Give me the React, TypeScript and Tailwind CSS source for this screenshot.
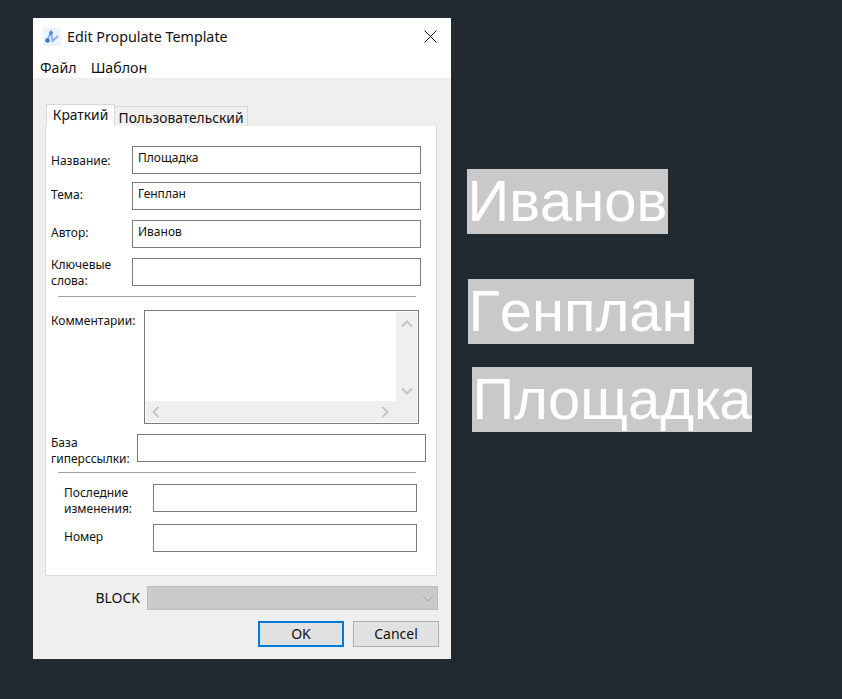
const ui = '"Noto Sans", "Open Sans", sans-serif';

function Row({ label, labelWidth, labelTop = 0, inputWidth, top, className = '', text }: { label: React.ReactNode; labelWidth: number; labelTop?: number; inputWidth: number; top?: number; className?: string; text?: string }) {
  return (
    <div className={`flex items-start h-[28px] ${className}`} style={{ marginTop: top }}>
      <div className="text-[12px] leading-[16px] text-[#111] shrink-0" style={{ width: labelWidth, marginTop: labelTop }}>
        {label}
      </div>
      <div className="h-[28px] border border-[#7a7a7a] bg-white pl-[5px] text-[12px] leading-[22px] text-[#111]" style={{ width: inputWidth }}>
        {text}
      </div>
    </div>
  );
}

function Chevron({ d }: { d: string }) {
  return (
    <svg width="12" height="12" viewBox="0 0 12 12" fill="none" stroke="#c4c4c4" strokeWidth="2">
      <path d={d} />
    </svg>
  );
}

function CadLabel({ text, width, left, top }: { text: string; width: number; left: number; top: number }) {
  return (
    <div
      className="h-[65px] bg-[#c9c9c9] text-white text-[58px] leading-[63px] whitespace-nowrap text-center [font-kerning:none]"
      style={{ width, marginLeft: left, marginTop: top, fontFamily: '"Liberation Sans", sans-serif' }}
    >
      {text}
    </div>
  );
}

export default function App() {
  return (
    <div className="w-[842px] h-[699px] bg-[#212931] flex items-start overflow-hidden" style={{ fontFamily: ui }}>
      <div className="w-[418px] h-[641px] ml-[33px] mt-[18px] bg-[#efefef] shrink-0 flex flex-col">
        {/* Title bar + menu */}
        <div className="bg-white h-[60px] shrink-0">
          <div className="h-[37px] flex items-center pl-[10px] pr-[14px]">
            <svg width="18" height="18" viewBox="0 0 18 18" className="shrink-0">
              <defs>
                <filter id="soft" x="-20%" y="-20%" width="140%" height="140%">
                  <feGaussianBlur stdDeviation="0.5" />
                </filter>
              </defs>
              <rect width="18" height="18" fill="#eef3fb" />
              <g filter="url(#soft)">
                <path d="M4 13 L8 4 L9.5 13 L15 8" fill="none" stroke="#8fb2e8" strokeWidth="2" />
                <circle cx="4.5" cy="12.5" r="2.2" fill="#2f74dc" />
                <circle cx="8" cy="5" r="1.9" fill="#4a88e4" />
              </g>
            </svg>
            <span className="ml-[6px] text-[14.3px] leading-[20px] text-[#111]">Edit Propulate Template</span>
            <svg width="13" height="13" viewBox="0 0 13 13" className="ml-auto" fill="none" stroke="#111" strokeWidth="1">
              <path d="M0.5 0.5 L12.5 12.5 M12.5 0.5 L0.5 12.5" />
            </svg>
          </div>
          <div className="flex gap-[14px] pl-[7px] text-[14.2px] leading-[20px] text-[#111] mt-[3px]">
            <span>Файл</span>
            <span>Шаблон</span>
          </div>
        </div>

        {/* Tabs */}
        <div className="flex items-end h-[27px] mt-[21px] ml-[13px] shrink-0">
          <div className="relative z-10 h-[22px] w-[69px] bg-white border border-b-0 border-[#d9d9d9] text-[13.8px] leading-[20px] text-center text-[#111]">
            Краткий
          </div>
          <div className="h-[20px] w-[133px] bg-[#f0f0f0] border border-b-0 border-l-0 border-[#d9d9d9] text-[13.8px] leading-[21px] text-center text-[#111] whitespace-nowrap">
            Пользовательский
          </div>
        </div>

        {/* Panel */}
        <div className="w-[392px] h-[450px] ml-[12px] bg-white border border-t-0 border-[#dcdcdc] shrink-0 pl-[5px]">
          <div className="pt-[20px]">
            <Row label="Название:" labelWidth={81} labelTop={7} inputWidth={289} text="Площадка" />
            <Row label="Тема:" labelWidth={81} labelTop={5} inputWidth={289} top={8} text="Генплан" />
            <Row label="Автор:" labelWidth={81} labelTop={5} inputWidth={289} top={10} text="Иванов" />
            <Row label={<>Ключевые<br />слова:</>} labelWidth={81} labelTop={-1} inputWidth={289} top={10} />
            <div className="h-px w-[358px] ml-[7px] mt-[10px] bg-[#a0a0a0]" />

            <div className="flex items-start mt-[13px]">
              <div className="w-[93px] text-[12px] leading-[16px] text-[#111] pt-[3px] shrink-0">Комментарии:</div>
              <div className="w-[275px] h-[114px] border border-[#7a7a7a] bg-white p-px flex flex-col">
                <div className="flex flex-1 min-h-0">
                  <div className="flex-1" />
                  <div className="w-[21px] bg-[#efefef] flex flex-col items-center justify-between pt-[6px] pb-[4px]">
                    <Chevron d="M1 8.5 L6 3.5 L11 8.5" />
                    <Chevron d="M1 3.5 L6 8.5 L11 3.5" />
                  </div>
                </div>
                <div className="h-[21px] bg-[#efefef] flex items-center justify-between pl-[4px] pr-[26px]">
                  <Chevron d="M8.5 1 L3.5 6 L8.5 11" />
                  <Chevron d="M3.5 1 L8.5 6 L3.5 11" />
                </div>
              </div>
            </div>

            <Row label={<>База<br />гиперссылки:</>} labelWidth={86} labelTop={1} inputWidth={289} top={10} />
            <div className="h-px w-[358px] ml-[7px] mt-[10px] bg-[#a0a0a0]" />

            <Row label={<>Последние<br />изменения:</>} labelWidth={89} labelTop={1} inputWidth={264} top={11} className="pl-[13px]" />
            <Row label="Номер" labelWidth={89} labelTop={5} inputWidth={264} top={12} className="pl-[13px]" />
          </div>
        </div>

        {/* Block combo */}
        <div className="flex items-center mt-[10px] shrink-0">
          <div className="w-[107px] text-right text-[14px] leading-[24px] text-[#111]">BLOCK</div>
          <div className="ml-[7px] w-[291px] h-[24px] bg-[#cacaca] border border-[#bcbcbc] flex items-center justify-end pr-[3px]">
            <svg width="12" height="12" viewBox="0 0 12 12" fill="none" stroke="#a8a8a8" strokeWidth="1">
              <path d="M1 4 L6 9 L11 4" />
            </svg>
          </div>
        </div>

        {/* Buttons */}
        <div className="flex mt-[11px] ml-[225px] gap-[9px] shrink-0">
          <div className="w-[86px] h-[26px] bg-[#e1e1e1] border-2 border-[#0078d7] text-[14px] leading-[22px] text-center text-[#111]">OK</div>
          <div className="w-[86px] h-[26px] bg-[#e1e1e1] border border-[#adadad] text-[14px] leading-[24px] text-center text-[#111]">Cancel</div>
        </div>
      </div>

      {/* Text objects on the drawing canvas */}
      <div className="flex flex-col items-start shrink-0">
        <CadLabel text="Иванов" width={201} left={16} top={169} />
        <CadLabel text="Генплан" width={226} left={17} top={45} />
        <CadLabel text="Площадка" width={280} left={21} top={23} />
      </div>
    </div>
  );
}
